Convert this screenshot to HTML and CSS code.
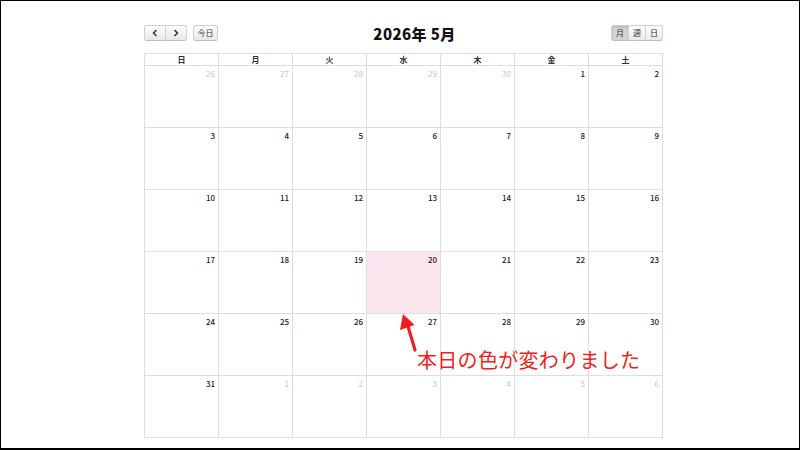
FILE: index.html
```html
<!DOCTYPE html>
<html lang="ja">
<head>
<meta charset="utf-8">
<link rel="stylesheet" href="styles.css">
</head>
<body>
<div class="frame">
  <div class="cal">
    <div class="toolbar">
      <div class="left">
        <div class="btn-group">
          <span class="btn chev"><svg width="8" height="8" viewBox="0 0 8 8"><path d="M5.5 1 L2.5 4 L5.5 7" fill="none" stroke="#333" stroke-width="1.5"/></svg></span>
          <span class="btn chev"><svg width="8" height="8" viewBox="0 0 8 8"><path d="M2.5 1 L5.5 4 L2.5 7" fill="none" stroke="#333" stroke-width="1.5"/></svg></span>
        </div>
        <span class="btn today-btn">今日</span>
      </div>
      <h2 class="title">2026年 5月</h2>
      <div class="right">
        <div class="btn-group">
          <span class="btn small active">月</span>
          <span class="btn small">週</span>
          <span class="btn small">日</span>
        </div>
      </div>
    </div>
    <div class="grid">
      <div class="dow">日</div><div class="dow">月</div><div class="dow">火</div><div class="dow">水</div><div class="dow">木</div><div class="dow">金</div><div class="dow">土</div>
      <div class="day other">26</div><div class="day other">27</div><div class="day other">28</div><div class="day other">29</div><div class="day other">30</div><div class="day">1</div><div class="day">2</div>
      <div class="day">3</div><div class="day">4</div><div class="day">5</div><div class="day">6</div><div class="day">7</div><div class="day">8</div><div class="day">9</div>
      <div class="day">10</div><div class="day">11</div><div class="day">12</div><div class="day">13</div><div class="day">14</div><div class="day">15</div><div class="day">16</div>
      <div class="day">17</div><div class="day">18</div><div class="day">19</div><div class="day today">20</div><div class="day">21</div><div class="day">22</div><div class="day">23</div>
      <div class="day">24</div><div class="day">25</div><div class="day">26</div><div class="day">27</div><div class="day">28</div><div class="day">29</div><div class="day">30</div>
      <div class="day">31</div><div class="day other">1</div><div class="day other">2</div><div class="day other">3</div><div class="day other">4</div><div class="day other">5</div><div class="day other">6</div>
    </div>
  </div>
  <svg class="arrow" width="30" height="50" viewBox="0 0 30 50">
    <line x1="22" y1="44" x2="14" y2="17" stroke="#f01e1e" stroke-width="3.2" stroke-linecap="round"/>
    <polygon points="10,8 7,24 21.5,19" fill="#f01e1e"/>
  </svg>
  <div class="note">本日の色が変わりました</div>
</div>
</body>
</html>
```
FILE: styles.css
```css
html, body {
  margin: 0;
  padding: 0;
  background: #fff;
}
.frame {
  position: relative;
  width: 800px;
  height: 450px;
  box-sizing: border-box;
  border: 1px solid #000;
  border-bottom-width: 2px;
  padding: 24px 0 0 143px;
  font-family: "Noto Sans CJK JP", "Noto Sans", sans-serif;
  color: #333;
}
.cal {
  width: 519px;
}
.toolbar {
  display: flex;
  align-items: center;
  height: 16px;
  margin-bottom: 12px;
}
.left, .right {
  display: flex;
  align-items: center;
  gap: 6px;
  flex: none;
}
.btn-group {
  display: flex;
}
.btn {
  display: flex;
  align-items: center;
  justify-content: center;
  height: 14px;
  border: 1px solid #d2d2d2;
  border-bottom-color: #bdbdbd;
  background: linear-gradient(#fdfdfd, #e8e8e8);
  font-size: 8px;
  line-height: 1;
  color: #333;
  box-sizing: content-box;
}
.btn-group .btn + .btn {
  border-left: none;
}
.btn-group .btn:first-child {
  border-radius: 3px 0 0 3px;
}
.btn-group .btn:last-child {
  border-radius: 0 3px 3px 0;
}
.chev {
  width: 20px;
}
.today-btn {
  width: 23px;
  border-radius: 3px;
}
.small {
  width: 16px;
}
.btn.active {
  background: #d4d4d4;
  box-shadow: inset 0 1px 2px rgba(0,0,0,0.18);
}
.title {
  flex: 1;
  text-align: center;
  margin: 0;
  font-size: 15px;
  font-weight: 900;
  color: #111;
  line-height: 16px;
  padding-top: 1px;
  letter-spacing: 0.4px;
}
.grid {
  display: grid;
  grid-template-columns: repeat(7, 74px);
  grid-template-rows: 13px repeat(6, 62px);
  border-left: 1px solid #dedede;
  width: 519px;
  box-sizing: border-box;
}
.dow {
  border-top: 1px solid #dedede;
  border-right: 1px solid #dedede;
  border-bottom: 1px solid #dedede;
  font-size: 8px;
  font-weight: 700;
  text-align: center;
  line-height: 11px;
  color: #333;
}
.dow, .day {
  box-sizing: border-box;
}
.day {
  border-right: 1px solid #dedede;
  border-bottom: 1px solid #dedede;
  font-size: 8px;
  font-weight: 500;
  text-align: right;
  padding: 3px 3px 0 0;
  line-height: 10px;
  color: #222;
}
.day.other {
  color: #c4c4c4;
  font-weight: 400;
}
.day.today {
  background: #fce7f0;
}
.arrow {
  position: absolute;
  left: 392px;
  top: 305px;
}
.note {
  position: absolute;
  left: 416px;
  top: 347px;
  font-size: 20px;
  line-height: 24px;
  color: #f01e1e;
  font-family: "Noto Sans CJK JP", sans-serif;
  letter-spacing: 0.3px;
}
```
